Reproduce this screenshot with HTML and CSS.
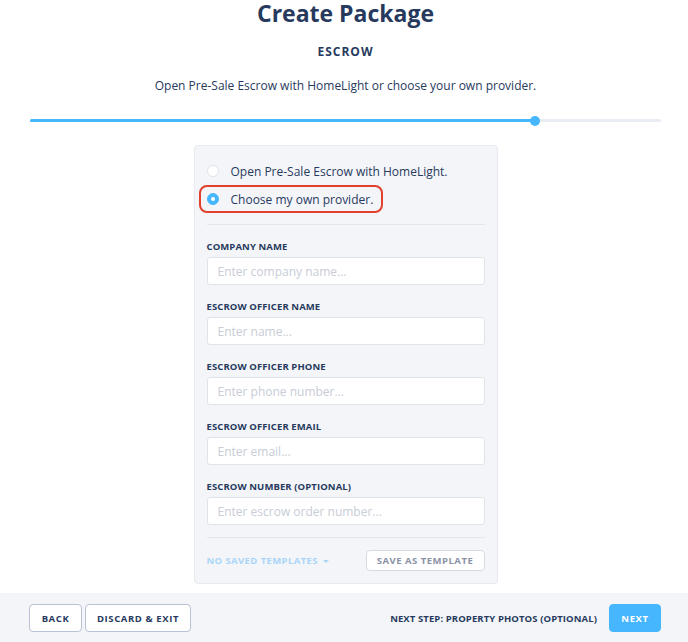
FILE: index.html
```html
<!doctype html>
<html lang="en">
<head>
  <meta charset="UTF-8">
  <meta name="viewport" content="width=device-width, initial-scale=1">
  <title>Create Package</title>
  <link rel="stylesheet" href="styles.css">
</head>
<body>
  <div id="content">
    <header class="head">
      <h1 class="title">Create Package</h1>
      <p class="step">ESCROW</p>
      <p class="desc">Open Pre-Sale Escrow with HomeLight or choose your own provider.</p>
    </header>

    <div class="progress">
      <div class="progress-fill" style="width: 80%"><span class="progress-dot"></span></div>
    </div>

    <main class="card">
      <div class="choices">
        <label class="choice">
          <span class="radio"></span>
          Open Pre-Sale Escrow with HomeLight.
        </label>
        <label class="choice choice-picked">
          <span class="radio radio-on"></span>
          Choose my own provider.
        </label>
      </div>

      <div class="fields">
        <div class="field">
          <p class="field-label">COMPANY NAME</p>
          <input class="field-input" placeholder="Enter company name...">
        </div>
        <div class="field">
          <p class="field-label">ESCROW OFFICER NAME</p>
          <input class="field-input" placeholder="Enter name...">
        </div>
        <div class="field">
          <p class="field-label">ESCROW OFFICER PHONE</p>
          <input class="field-input" placeholder="Enter phone number...">
        </div>
        <div class="field">
          <p class="field-label">ESCROW OFFICER EMAIL</p>
          <input class="field-input" placeholder="Enter email...">
        </div>
        <div class="field">
          <p class="field-label">ESCROW NUMBER (OPTIONAL)</p>
          <input class="field-input" placeholder="Enter escrow order number...">
        </div>
      </div>

      <div class="templates">
        <span class="templates-pick">NO SAVED TEMPLATES <span class="caret"></span></span>
        <button class="btn btn-small">SAVE AS TEMPLATE</button>
      </div>
    </main>
  </div>

  <footer class="bottom">
    <div class="bottom-left">
      <button class="btn">BACK</button>
      <button class="btn">DISCARD &amp; EXIT</button>
    </div>
    <div class="bottom-right">
      <span class="next-step">NEXT STEP: PROPERTY PHOTOS (OPTIONAL)</span>
      <button class="btn btn-blue">NEXT</button>
    </div>
  </footer>
</body>
</html>
```

FILE: styles.css
```css
*{
  box-sizing: border-box;
}
body{
  margin: 0;
  font-family: "Open Sans", "Liberation Sans", sans-serif;
  color: #273a5e;
  background: #fff;
}
#content{
  padding: 0 27px 0 30px;
}
.head{
  text-align: center;
}
.title{
  margin: 0;
  font-size: 23px;
  line-height: 27px;
  font-weight: 700;
}
.step{
  margin: 17px 0 0;
  font-size: 12px;
  line-height: 16px;
  font-weight: 700;
  letter-spacing: 1px;
}
.desc{
  margin: 17px 0 0;
  font-size: 12px;
  line-height: 18px;
}

.progress{
  margin-top: 24px;
  height: 3px;
  border-radius: 2px;
  background: #e9ecf2;
}
.progress-fill{
  position: relative;
  height: 3px;
  border-radius: 2px;
  background: #46b6ff;
}
.progress-dot{
  position: absolute;
  right: -5px;
  top: -3.5px;
  width: 10px;
  height: 10px;
  border-radius: 50%;
  background: #46b6ff;
}

.card{
  width: 304px;
  margin: 23px auto 0;
  padding: 11px 12px 12px;
  background: #f4f5f9;
  border: 1px solid #e6e9ef;
  border-radius: 4px;
}
.choices{
  padding-bottom: 11px;
  border-bottom: 1px solid #e3e6ec;
}
.choice{
  display: flex;
  align-items: center;
  gap: 12px;
  height: 28px;
  font-size: 12px;
}
.choice-picked{
  width: 184px;
  margin-left: -8px;
  padding-left: 6px;
  border: 2px solid #e0402d;
  border-radius: 8px;
}
.radio{
  width: 12px;
  height: 12px;
  border-radius: 50%;
  background: #fff;
  border: 1px solid #dfe3ea;
}
.radio-on{
  position: relative;
  background: #46b6ff;
  border-color: #46b6ff;
}
.radio-on::after{
  content: "";
  position: absolute;
  left: 3px;
  top: 3px;
  width: 4px;
  height: 4px;
  border-radius: 50%;
  background: #fff;
}

.fields{
  display: flex;
  flex-direction: column;
  gap: 15px;
  padding: 15px 0 12px;
  border-bottom: 1px solid #e3e6ec;
}
.field-label{
  margin: 0 0 4px;
  font-size: 9.5px;
  line-height: 13px;
  font-weight: 700;
  letter-spacing: 0.1px;
}
.field-input{
  display: block;
  width: 100%;
  height: 28px;
  padding: 0 10px;
  background: #fff;
  border: 1px solid #dfe3ea;
  border-radius: 3px;
  font-family: inherit;
  font-size: 12px;
  color: #273a5e;
}
.field-input::placeholder{
  color: #c8cdd6;
}

.templates{
  display: flex;
  justify-content: space-between;
  align-items: center;
  padding-top: 12px;
}
.templates-pick{
  font-size: 9.5px;
  font-weight: 700;
  letter-spacing: 0.4px;
  color: #a9d6f8;
}
.caret{
  display: inline-block;
  margin-left: 2px;
  border-left: 3px solid transparent;
  border-right: 3px solid transparent;
  border-top: 3px solid #a9d6f8;
  vertical-align: middle;
}

.btn{
  height: 28px;
  padding: 0 12px;
  background: #fff;
  border: 1px solid #b7c2d5;
  border-radius: 4px;
  font-family: inherit;
  font-size: 9.5px;
  font-weight: 700;
  letter-spacing: 0.6px;
  color: #273a5e;
}
.btn-small{
  width: 119px;
  height: 21px;
  padding: 0;
  border-color: #d5dae3;
  color: #8a93a6;
  font-size: 9.5px;
  letter-spacing: 0.5px;
}
.btn-blue{
  width: 52px;
  padding: 0;
  background: #46b6ff;
  border-color: #46b6ff;
  color: #fff;
}

.bottom{
  display: flex;
  justify-content: space-between;
  align-items: center;
  margin-top: 9px;
  height: 50px;
  padding: 0 27px 0 29px;
  background: #f4f5f9;
}
.bottom-left{
  display: flex;
  gap: 3px;
}
.bottom-left .btn:first-child{
  width: 53px;
  padding: 0;
}
.bottom-left .btn:last-child{
  width: 106px;
  padding: 0;
}
.bottom-right{
  display: flex;
  align-items: center;
  gap: 12px;
}
.next-step{
  font-size: 9.5px;
  font-weight: 700;
  letter-spacing: 0.1px;
}
```
